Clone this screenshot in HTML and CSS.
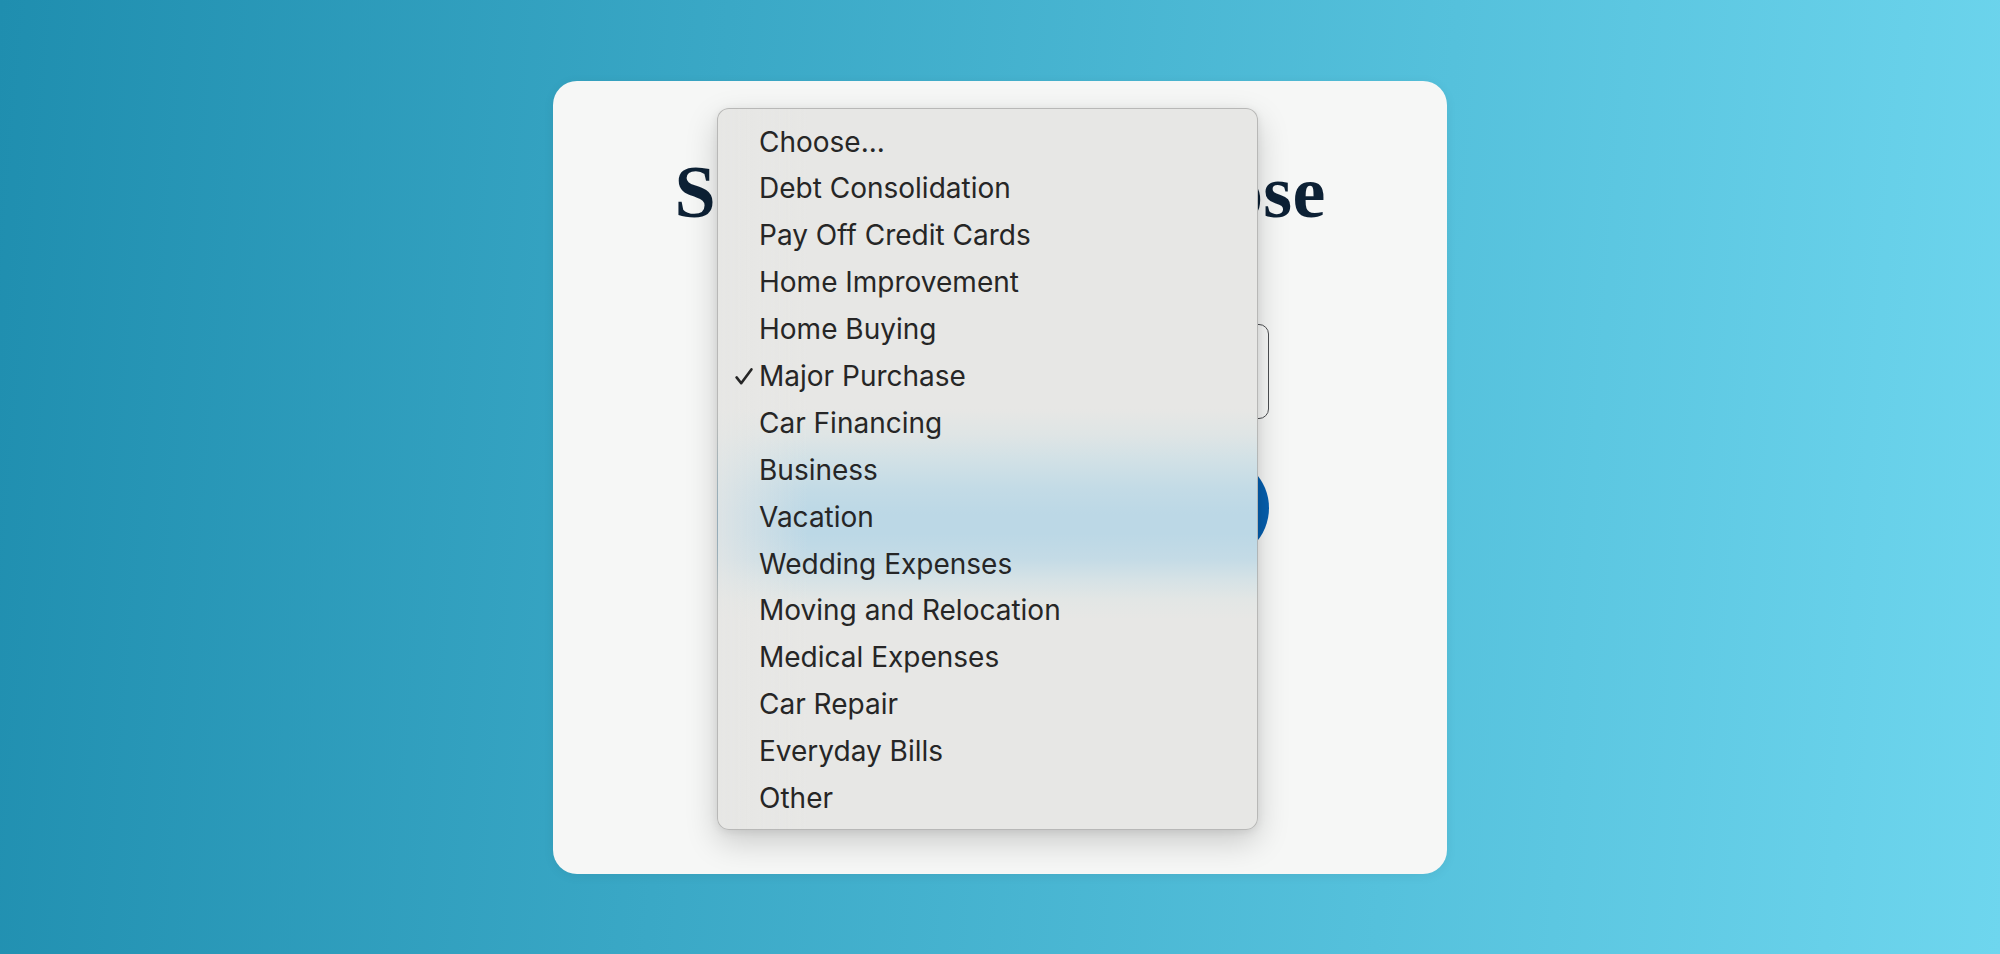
FILE: index.html
```html
<!DOCTYPE html>
<html lang="en">
<head>
<meta charset="utf-8">
<title>Select Loan Purpose</title>
<link rel="stylesheet" href="styles.css">
</head>
<body>
<main class="card">
  <h1 class="title">Select Loan Purpose</h1>
  <form class="form">
    <div class="select"><span class="select-value">Major Purchase</span></div>
    <button class="btn" type="button">Continue</button>
  </form>
  <ul class="menu">
    <li class="item">Choose...</li>
    <li class="item">Debt Consolidation</li>
    <li class="item">Pay Off Credit Cards</li>
    <li class="item">Home Improvement</li>
    <li class="item">Home Buying</li>
    <li class="item is-checked"><svg class="check" viewBox="0 0 18 17" width="18" height="17"><path d="M1.6 9.4 L6.2 15.2 L16.4 1.4" fill="none" stroke="#262626" stroke-width="2.6" stroke-linecap="round" stroke-linejoin="round"/></svg>Major Purchase</li>
    <li class="item">Car Financing</li>
    <li class="item">Business</li>
    <li class="item">Vacation</li>
    <li class="item">Wedding Expenses</li>
    <li class="item">Moving and Relocation</li>
    <li class="item">Medical Expenses</li>
    <li class="item">Car Repair</li>
    <li class="item">Everyday Bills</li>
    <li class="item">Other</li>
  </ul>
</main>
</body>
</html>
```

FILE: styles.css
```css
html, body {
  margin: 0;
  padding: 0;
}

body {
  width: 2000px;
  height: 954px;
  display: flex;
  align-items: center;
  justify-content: center;
  background: linear-gradient(95deg, #1f8eaf 0%, #3aa8c6 35%, #55c1dc 70%, #6ed6ee 100%);
  font-family: "Liberation Sans", Arial, sans-serif;
  overflow: hidden;
}

.card {
  position: relative;
  box-sizing: border-box;
  width: 894px;
  height: 793px;
  padding: 74px 0 0;
  background: #f6f7f6;
  border-radius: 24px;
  box-shadow: 0 2px 12px rgba(0, 0, 0, 0.06);
}

.title {
  margin: 0;
  font-family: "Liberation Serif", "Times New Roman", serif;
  font-weight: 700;
  font-size: 74px;
  line-height: 74px;
  letter-spacing: 0.3px;
  color: #0d2135;
  text-align: center;
  white-space: nowrap;
}

.form {
  display: flex;
  flex-direction: column;
  gap: 37px;
  width: 538px;
  margin: 95px auto 0;
}

.select {
  box-sizing: border-box;
  height: 95px;
  border: 1.6px solid #4d4f52;
  border-radius: 10px;
  background: #f8f9f8;
  display: flex;
  align-items: center;
  padding: 0 24px;
  font-size: 28px;
  color: #222;
}

.btn {
  height: 104px;
  border: 0;
  border-radius: 52px;
  background: #065fae;
  color: #fff;
  font-family: "Liberation Sans", Arial, sans-serif;
  font-size: 30px;
  font-weight: 700;
}

.menu {
  position: absolute;
  left: 164px;
  top: 27px;
  box-sizing: border-box;
  width: 541px;
  margin: 0;
  padding: 10px 0 7px;
  list-style: none;
  border: 1px solid rgba(0, 0, 0, 0.2);
  border-radius: 12px;
  background:
    linear-gradient(to right, rgba(231, 231, 229, 0.75) 0px, rgba(231, 231, 229, 0) 90px),
    linear-gradient(to bottom,
      #e7e7e5 0px,
      #e7e7e5 300px,
      #dfe5e5 325px,
      #d2e1e6 350px,
      #c3dbe6 380px,
      #bcd8e6 405px,
      #bcd8e6 425px,
      #c4dbe6 450px,
      #d5e2e6 470px,
      #e2e6e5 490px,
      #e7e7e5 510px,
      #e7e7e5 100%);
  box-shadow: 0 12px 32px rgba(0, 0, 0, 0.18), 0 2px 8px rgba(0, 0, 0, 0.08);
}

.item {
  position: relative;
  height: 46.9px;
  line-height: 46.9px;
  padding-left: 41px;
  font-family: "Inter", "Liberation Sans", sans-serif;
  font-size: 28px;
  color: #262626;
  white-space: nowrap;
}

.check {
  position: absolute;
  left: 17px;
  top: 15px;
}
```
